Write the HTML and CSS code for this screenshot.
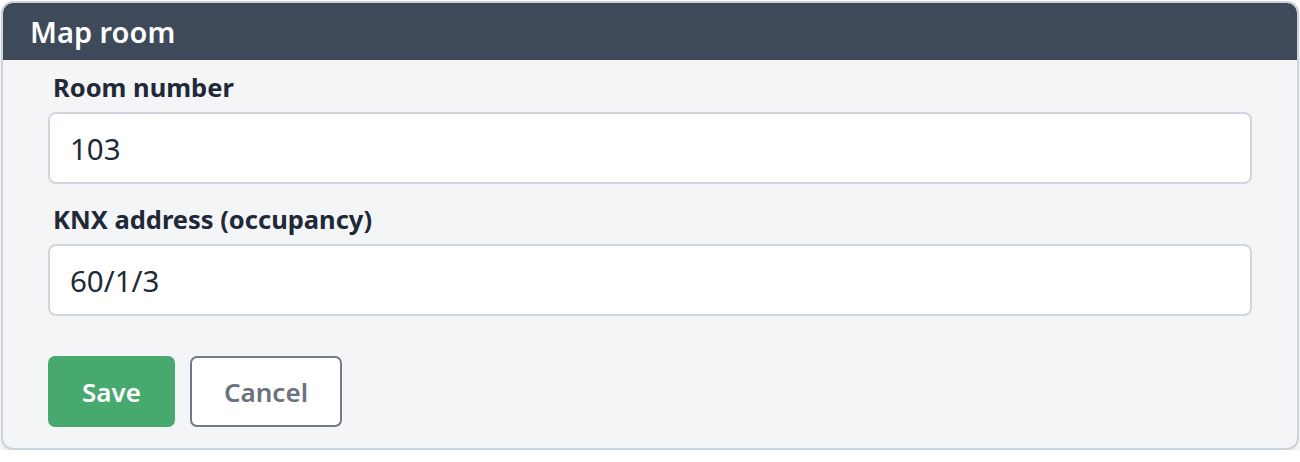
FILE: index.html
```html
<!DOCTYPE html>
<html lang="en">
  <head>
    <meta charset="UTF-8" />
    <meta name="viewport" content="width=device-width, initial-scale=1.0" />
    <title>Map room</title>
    <link rel="stylesheet" href="styles.css">
  </head>
  <body>
    <section class="card">
      <header class="card__header">Map room</header>
      <form class="card__body">
        <div class="field">
          <label for="room" class="field__label">Room number</label>
          <input id="room" class="field__input" type="text" value="103" />
        </div>
        <div class="field">
          <label for="knx" class="field__label">KNX address (occupancy)</label>
          <input id="knx" class="field__input" type="text" value="60/1/3" />
        </div>
        <div class="actions">
          <button type="button" class="btn btn--save">Save</button>
          <button type="button" class="btn btn--cancel">Cancel</button>
        </div>
      </form>
    </section>
  </body>
</html>
```

FILE: styles.css
```css
:root {
  --header: #3e4a59;
  --panel: #f3f5f7;
  --border: #cdd3dc;
  --input-border: #d2d6dc;
  --text: #1f2937;
  --muted: #6b7280;
  --green: #48a96f;
}
*,
*::before,
*::after {
  box-sizing: border-box;
}
body {
  margin: 0;
  padding: 1px 1px 0;
  background: #fff;
  font-family: "Noto Sans", "Open Sans", sans-serif;
  color: var(--text);
}

.card {
  border: 2px solid var(--border);
  border-radius: 12px;
  overflow: hidden;
  background: var(--panel);
  box-shadow: 0 6px 12px rgba(0, 0, 0, 0.1);
}
.card__header {
  height: 57px;
  padding: 0 27px;
  display: flex;
  align-items: center;
  background: var(--header);
  color: #fff;
  font-size: 29px;
  font-weight: 600;
}
.card__body {
  padding: 11px 45px 21px;
}

.field {
  display: flex;
  flex-direction: column;
  gap: 9px;
  margin-bottom: 19px;
}
.field__label {
  padding-left: 5px;
  font-size: 25.5px;
  line-height: 32px;
  font-weight: 700;
}
.field__input {
  height: 72px;
  padding: 0 20px;
  border: 2px solid var(--input-border);
  border-radius: 8px;
  background: #fff;
  font: inherit;
  font-size: 29.5px;
  color: var(--text);
}

.actions {
  display: flex;
  gap: 15px;
  padding-top: 21px;
}
.btn {
  height: 71px;
  border-radius: 7px;
  font: inherit;
  font-size: 26px;
  font-weight: 600;
  cursor: pointer;
}
.btn--save {
  width: 127px;
  border: 0;
  background: var(--green);
  color: #fff;
}
.btn--cancel {
  width: 152px;
  border: 2px solid #737a85;
  background: #fff;
  color: var(--muted);
}
```
